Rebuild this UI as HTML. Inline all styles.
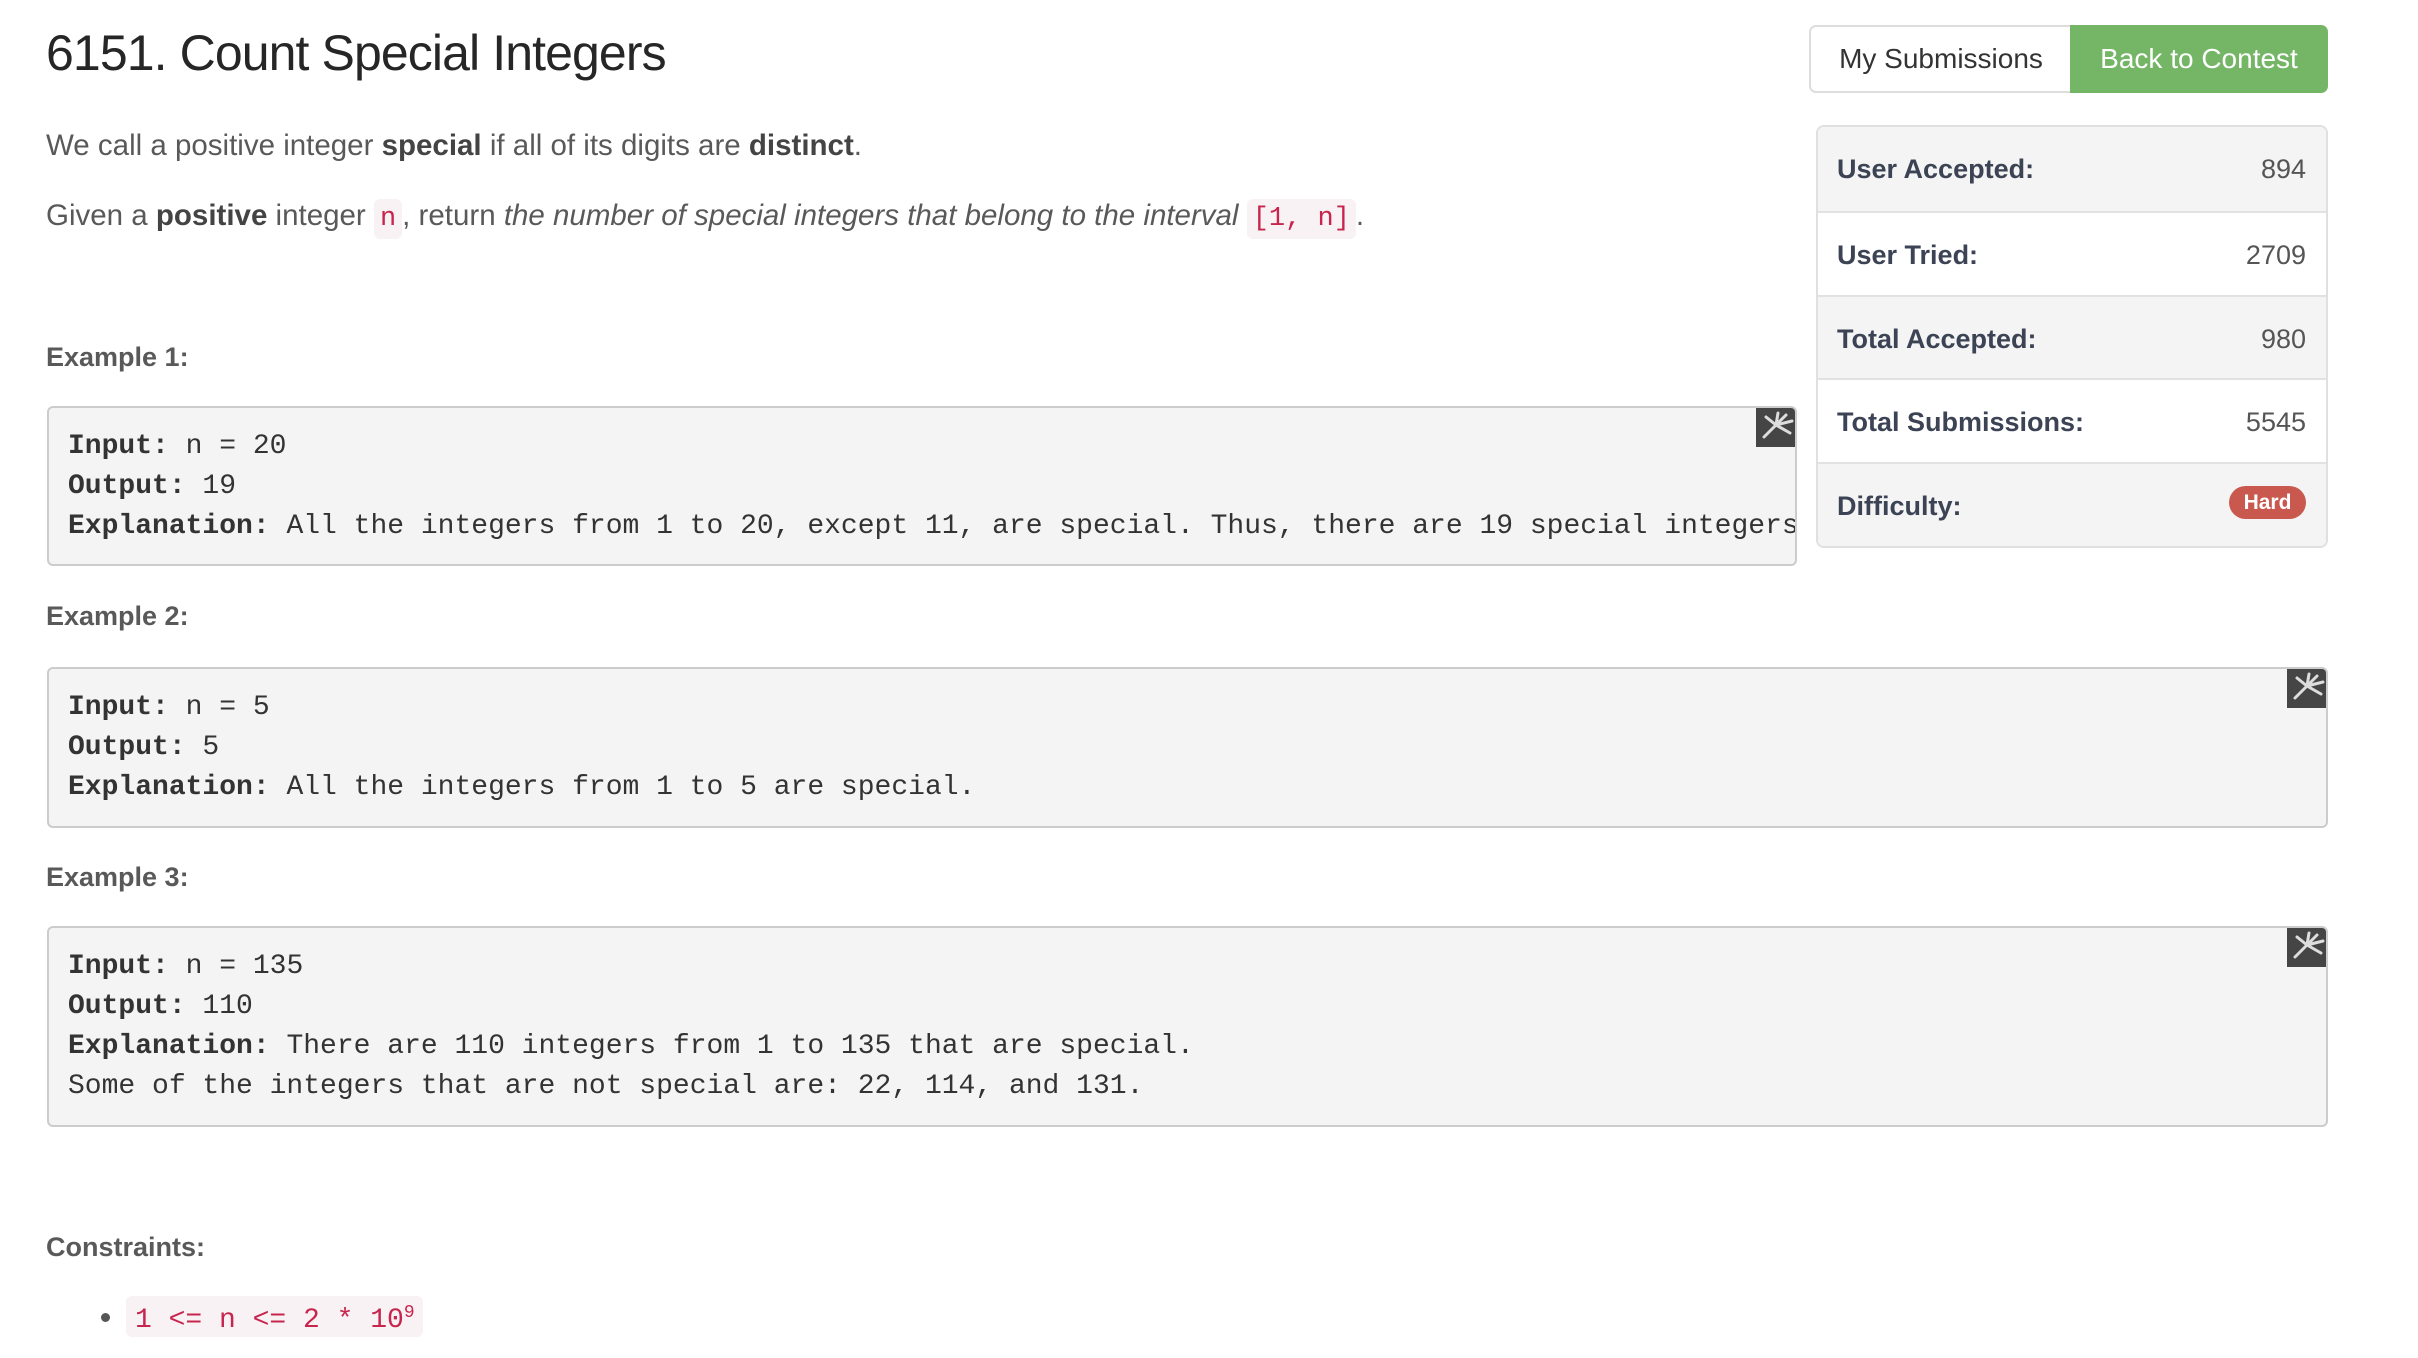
<!DOCTYPE html>
<html><head><meta charset="utf-8"><style>
*{margin:0;padding:0;box-sizing:border-box}
body{width:2418px;height:1358px;background:#fff;position:relative;overflow:hidden;font-family:"Liberation Sans",sans-serif;color:#595959}
.a{position:absolute;white-space:nowrap}
h1{font-size:50px;font-weight:normal;color:#262626;letter-spacing:-0.9px;line-height:50px}
.p{font-size:29.5px;line-height:29px}
.p b{color:#444}
code{font-family:"Liberation Mono",monospace;font-size:27px;color:#c7254e;background:#f9f2f4;border-radius:6px;padding:5px 6px}
.h{font-size:27px;font-weight:bold;color:#595959;line-height:27px}
pre{position:absolute;left:47px;background:#f4f4f4;border:2px solid #ccc;border-radius:6px;font-family:"Liberation Mono",monospace;font-size:28px;line-height:40px;color:#333;padding:19px 19px 17px;overflow:hidden;white-space:pre}
pre b{color:#333}
.ic{position:absolute;right:-1px;top:-1px;width:40px;height:40px;background:#454545;border-top-right-radius:6px}
.btn{position:absolute;top:25px;height:68px;font-size:28px;line-height:68px;text-align:center}
.st{position:absolute;left:1816px;top:125px;width:512px;border:2px solid #e0e0e0;border-radius:8px;overflow:hidden}
.r{height:83.8px;border-top:2px solid #e2e2e2;position:relative;font-size:27px}
.r:first-child{border-top:none}
.r:nth-child(odd){background:#f4f4f4}
.r span{position:absolute;left:19px;top:27px;font-weight:bold;color:#3b4354}
.r i{position:absolute;right:20px;top:27px;font-style:normal;color:#555}
</style></head><body>
<h1 class="a" style="left:46px;top:28px">6151. Count Special Integers</h1>
<div class="a p" style="left:46px;top:131px">We call a positive integer <b>special</b> if all of its digits are <b>distinct</b>.</div>
<div class="a p" style="left:46px;top:201px">Given a <b>positive</b> integer <code>n</code>, return <i>the number of special integers that belong to the interval</i> <code>[1, n]</code>.</div>
<div class="a h" style="left:46px;top:344px">Example 1:</div>
<pre style="top:406px;width:1750px;height:160px"><b>Input:</b> n = 20
<b>Output:</b> 19
<b>Explanation:</b> All the integers from 1 to 20, except 11, are special. Thus, there are 19 special integers.<div class="ic"><svg width="40" height="40"><g stroke="#ddd" stroke-width="3" stroke-linecap="round"><path d="M8 30 L20 18 M20 18 L22 6 M20 18 L30 8 M20 18 L36 14 M20 18 L34 26 M20 18 L10 10"/></g></svg></div></pre>
<div class="a h" style="left:46px;top:603px">Example 2:</div>
<pre style="top:667px;width:2281px;height:161px"><b>Input:</b> n = 5
<b>Output:</b> 5
<b>Explanation:</b> All the integers from 1 to 5 are special.<div class="ic"><svg width="40" height="40"><g stroke="#ddd" stroke-width="3" stroke-linecap="round"><path d="M8 30 L20 18 M20 18 L22 6 M20 18 L30 8 M20 18 L36 14 M20 18 L34 26 M20 18 L10 10"/></g></svg></div></pre>
<div class="a h" style="left:46px;top:864px">Example 3:</div>
<pre style="top:926px;width:2281px;height:201px"><b>Input:</b> n = 135
<b>Output:</b> 110
<b>Explanation:</b> There are 110 integers from 1 to 135 that are special.
Some of the integers that are not special are: 22, 114, and 131.<div class="ic"><svg width="40" height="40"><g stroke="#ddd" stroke-width="3" stroke-linecap="round"><path d="M8 30 L20 18 M20 18 L22 6 M20 18 L30 8 M20 18 L36 14 M20 18 L34 26 M20 18 L10 10"/></g></svg></div></pre>
<div class="a h" style="left:46px;top:1234px">Constraints:</div>
<div class="a" style="left:101px;top:1313px;width:9px;height:9px;border-radius:50%;background:#555"></div>
<div class="a" style="left:126px;top:1296px;width:297px;height:41px;background:#f9f2f4;border-radius:6px"></div>
<div class="a" style="left:135px;top:1298px;font-family:'Liberation Mono',monospace;font-size:28px;color:#c7254e;line-height:30px">1 &lt;= n &lt;= 2 * 10<sup style="font-size:18px;vertical-align:10px">9</sup></div>
<div class="btn" style="left:1809px;width:262px;border:2px solid #ddd;border-right:none;border-radius:7px 0 0 7px;color:#333;line-height:64px">My Submissions</div>
<div class="btn" style="left:2070px;width:258px;background:#74b566;color:#fff;border-radius:0 7px 7px 0">Back to Contest</div>
<div class="st">
<div class="r"><span>User Accepted:</span><i>894</i></div>
<div class="r"><span>User Tried:</span><i>2709</i></div>
<div class="r"><span>Total Accepted:</span><i>980</i></div>
<div class="r"><span>Total Submissions:</span><i>5545</i></div>
<div class="r"><span>Difficulty:</span><b style="position:absolute;right:20px;top:22px;width:77px;height:33px;border-radius:17px;background:#c9594f;color:#fff;font-size:21px;line-height:33px;text-align:center">Hard</b></div>
</div>
</body></html>
